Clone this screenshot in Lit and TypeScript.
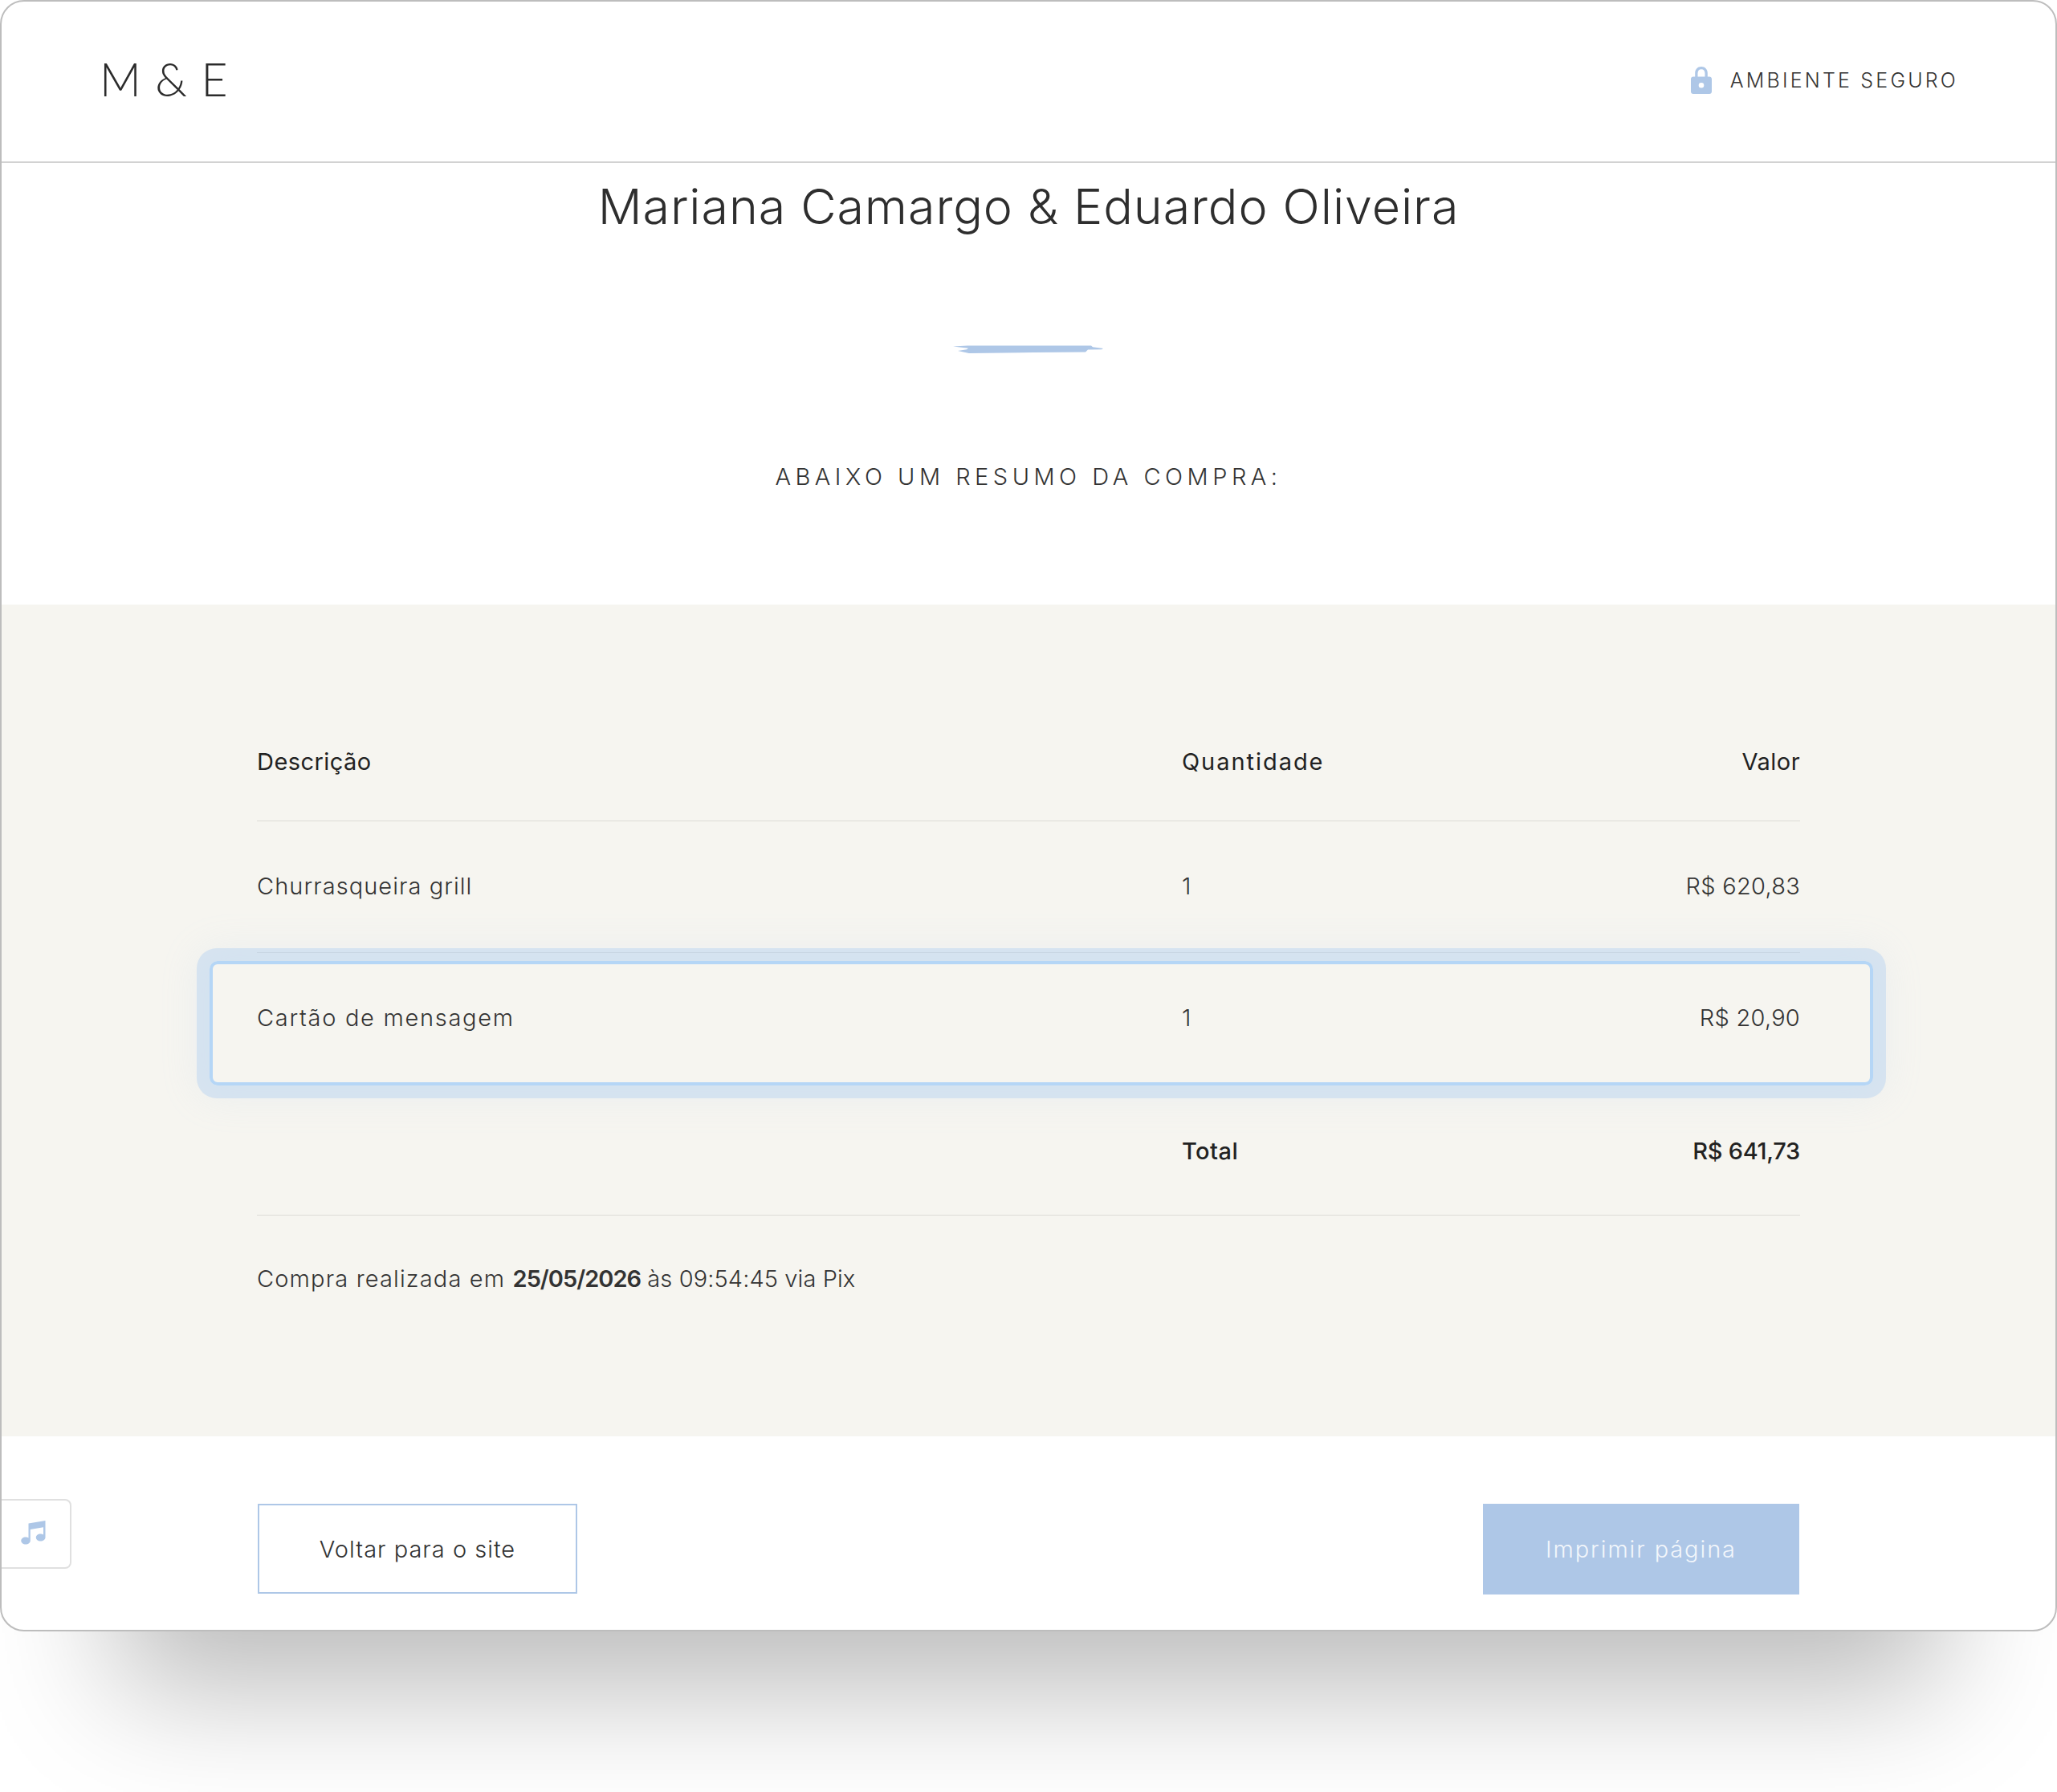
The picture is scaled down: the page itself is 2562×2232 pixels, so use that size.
import { LitElement, html, css } from "lit";
import { customElement } from "lit/decorators.js";

@customElement("app-root")
export class AppRoot extends LitElement {
  static styles = css`
    :host {
      display: block;
      width: 2562px;
      height: 2232px;
      background: #fff;
      font-family: Inter, "Liberation Sans", sans-serif;
      color: #333;
      overflow: hidden;
    }
    .window {
      position: relative;
      box-sizing: border-box;
      height: 2032px;
      background: #fff;
      border: 2px solid #bdbdbd;
      border-radius: 30px;
      box-shadow: 0 216px 150px -145px rgba(0, 0, 0, 0.27);
    }
    .header {
      box-sizing: border-box;
      height: 201px;
      padding: 0 121px 3px 122px;
      display: flex;
      align-items: center;
      justify-content: space-between;
      border-bottom: 2px solid #d2d2d2;
    }
    .logo {
      font-family: Lato, sans-serif;
      font-weight: 300;
      font-size: 57px;
      letter-spacing: 1px;
      color: #2b2b2b;
      margin-top: -4px;
    }
    .secure {
      display: flex;
      align-items: center;
      gap: 23px;
      font-size: 25px;
      font-weight: 350;
      letter-spacing: 3.2px;
    }
    .secure svg { width: 26px; height: 34px; display: block; }
    .title {
      margin: 0;
      padding-top: 22px;
      text-align: center;
      font-size: 61px;
      line-height: 64px;
      font-weight: 280;
      letter-spacing: 0.9px;
      color: #2e2e2e;
    }
    .stroke { display: block; margin: 141px auto 0; width: 188px; height: 11px; }
    .subtitle {
      margin: 0;
      padding-top: 136px;
      height: 176px;
      box-sizing: content-box;
      text-align: center;
      font-size: 29px;
      line-height: 34px;
      font-weight: 350;
      letter-spacing: 5.5px;
    }
    .panel {
      position: relative;
      box-sizing: border-box;
      height: 1036px;
      background: #f6f5f0;
      padding: 122px 318px 0;
      font-size: 29px;
      font-weight: 350;
    }
    .row {
      display: grid;
      grid-template-columns: 1152px 1fr auto;
      align-items: center;
      box-sizing: border-box;
      border-bottom: 1px solid #dddcd6;
    }
    .row > :last-child { text-align: right; }
    .head { height: 148px; font-weight: 420; color: #222; }
    .item { height: 164px; padding-bottom: 2px; }
    .total { height: 163px; padding-top: 2px; font-weight: 500; color: #222; }
    .word { letter-spacing: 1.05px; }
    .word-wide { letter-spacing: 1.7px; }
    .word-head { letter-spacing: 1.95px; }
    .word-tight { letter-spacing: 0.45px; }
    .money { letter-spacing: 0.25px; }
    .money-total { letter-spacing: -0.3px; }
    .note { padding-top: 61px; letter-spacing: 0.1px; }
    .note-lead { letter-spacing: 1.15px; }
    .date { font-weight: 600; letter-spacing: -1px; }
    .focus {
      position: absolute;
      left: 259px;
      top: 444px;
      width: 2072px;
      height: 155px;
      box-sizing: border-box;
      border: 4px solid #b5d6f6;
      border-radius: 10px;
      box-shadow: 0 0 0 16px rgba(176, 208, 240, 0.42), 0 0 48px 16px rgba(176, 208, 240, 0.14);
      pointer-events: none;
    }
    .music {
      position: absolute;
      left: 0;
      top: 1865px;
      box-sizing: border-box;
      width: 87px;
      height: 87px;
      display: flex;
      align-items: center;
      justify-content: center;
      background: #fff;
      border: 2px solid #e0e0e0;
      border-left: none;
      border-radius: 0 8px 8px 0;
    }
    .music svg { width: 31px; height: 30px; display: block; margin-left: -6px; margin-top: -4px; }
    .actions {
      display: flex;
      justify-content: space-between;
      padding: 84px 319px 0;
    }
    .btn {
      box-sizing: border-box;
      width: 398px;
      height: 112px;
      display: flex;
      align-items: center;
      justify-content: center;
      font-size: 29px;
      font-weight: 350;
      letter-spacing: 1px;
      border: 2px solid #aec7e7;
    }
    .btn.primary {
      background: #aec7e7;
      color: #f2f6fb;
      font-weight: 300;
      letter-spacing: 1.9px;
      width: 394px;
      height: 113px;
    }
  `;

  render() {
    return html`
      <div class="window">
        <div class="header">
          <div class="logo">M &amp; E</div>
          <div class="secure">
            <svg viewBox="0 0 26 34">
              <path fill="#aec7e7" fill-rule="evenodd" d="M13 0c-4.600 0-7.800 3.400-7.800 8v4.500H3c-1.700 0-3 1.300-3 3V31c0 1.700 1.300 3 3 3h20c1.700 0 3-1.300 3-3V15.500c0-1.700-1.300-3-3-3h-2.200V8c0-4.600-3.200-8-7.800-8zM8.500 12.500V8.200C8.500 5.300 10.300 3.300 13 3.300s4.500 2 4.500 4.900v4.300zM13 20a3.300 3.300 0 1 1 0 6.600 3.300 3.300 0 0 1 0-6.600z"/>
            </svg>
            AMBIENTE SEGURO
          </div>
        </div>
        <h1 class="title">Mariana Camargo &amp; Eduardo Oliveira</h1>
        <svg class="stroke" viewBox="0 0 188 11">
          <path fill="#aec7e7" d="M0 1.500 18 .5 172 .5 174 2.200 187 4 185 5.200 168 5.500 165 8.500 100 9 20 10 6 7 17 5.200 19 3.800z"/>
        </svg>
        <h2 class="subtitle">ABAIXO UM RESUMO DA COMPRA:</h2>
        <div class="panel">
          <div class="row head"><span class="word-tight">Descrição</span><span class="word-head">Quantidade</span><span class="word-tight">Valor</span></div>
          <div class="row item"><span class="word">Churrasqueira grill</span><span>1</span><span class="money">R$ 620,83</span></div>
          <div class="row item"><span class="word-wide">Cartão de mensagem</span><span>1</span><span class="money">R$ 20,90</span></div>
          <div class="row total"><span></span><span class="word-tight">Total</span><span class="money-total">R$ 641,73</span></div>
          <div class="note"><span class="note-lead">Compra realizada em </span><span class="date">25/05/2026</span> às 09:54:45 via Pix</div>
          <div class="focus"></div>
        </div>
        <div class="actions">
          <div class="btn">Voltar para o site</div>
          <div class="btn primary">Imprimir página</div>
        </div>
        <div class="music">
          <svg viewBox="0 0 31 30">
            <path fill="#aec7e7" d="M30.500 0 9.500 3.500V21.500A5 4.500 0 0 0 6 20.500C2.800 20.500.3 22.500.3 25S2.800 29.500 6 29.500s5.800-2 5.800-4.500V11L28 8.300V17.500a5 4.500 0 0 0-3.500-1c-3.200 0-5.700 2-5.700 4.500s2.500 4.500 5.700 4.500 6-2 6-4.500z"/>
          </svg>
        </div>
      </div>
    `;
  }
}
